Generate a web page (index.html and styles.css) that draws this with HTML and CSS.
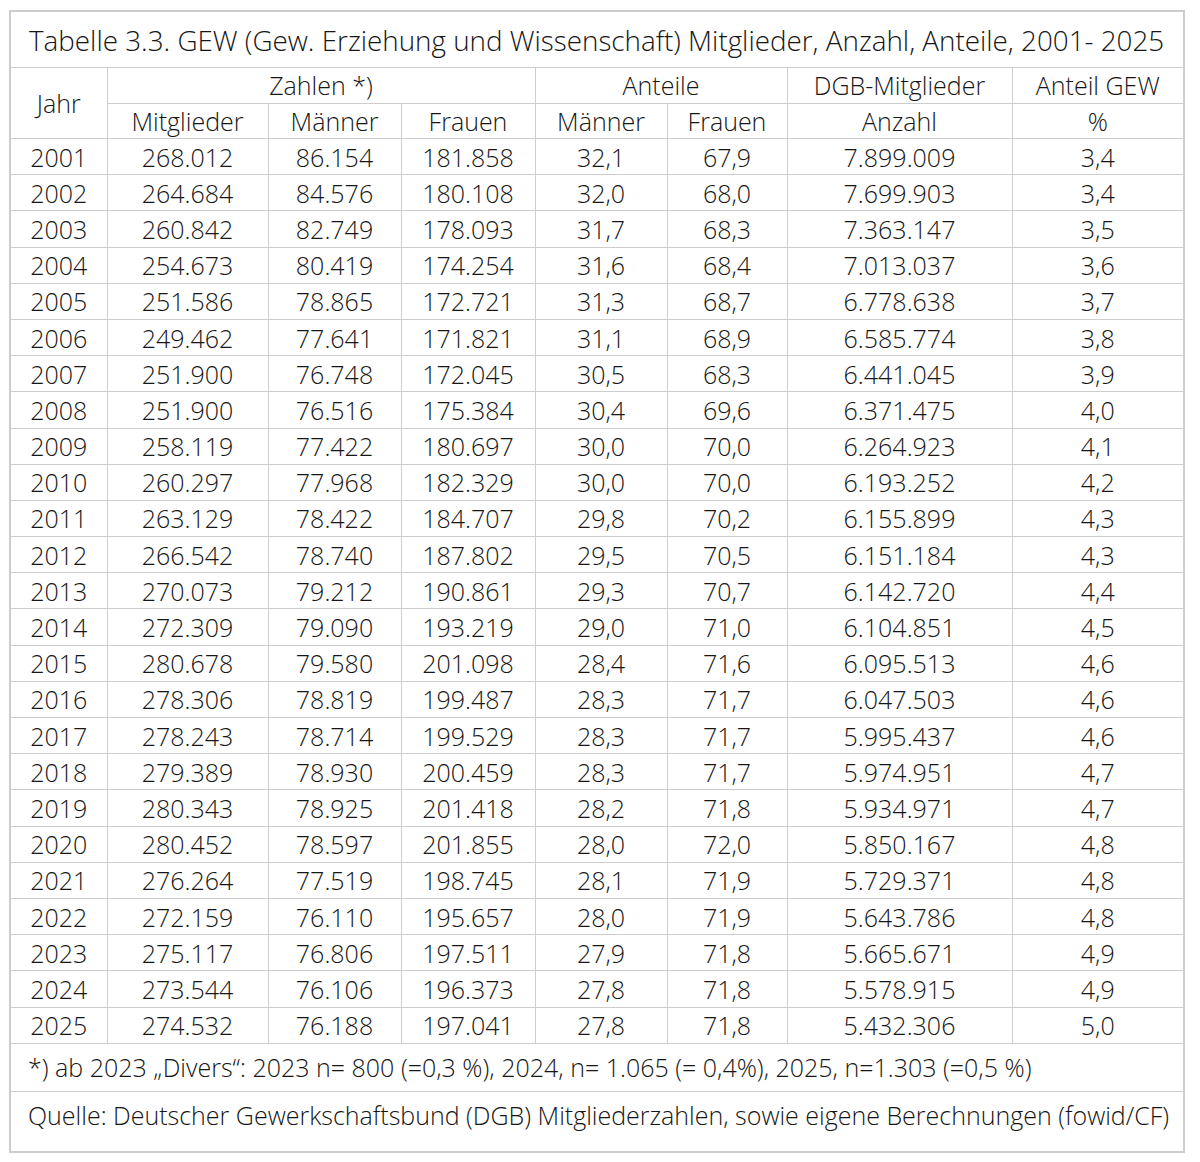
FILE: index.html
```html
<!DOCTYPE html>
<html lang="de">
<head>
<meta charset="utf-8">
<title>Tabelle 3.3 GEW</title>
<link rel="stylesheet" href="styles.css">
</head>
<body>
<table class="tbl">
  <colgroup>
    <col class="c-jahr"><col class="c-mit"><col class="c-m"><col class="c-f"><col class="c-am"><col class="c-af"><col class="c-dgb"><col class="c-ant">
  </colgroup>
  <thead>
    <tr class="title-row"><th colspan="8" class="title">Tabelle 3.3. GEW (Gew. Erziehung und Wissenschaft) Mitglieder, Anzahl, Anteile, 2001- 2025</th></tr>
    <tr class="hrow"><th rowspan="2">Jahr</th><th colspan="3">Zahlen *)</th><th colspan="2">Anteile</th><th>DGB-Mitglieder</th><th>Anteil GEW</th></tr>
    <tr class="hrow"><th>Mitglieder</th><th>Männer</th><th>Frauen</th><th>Männer</th><th>Frauen</th><th>Anzahl</th><th>%</th></tr>
  </thead>
  <tbody>
    <tr><td>2001</td><td>268.012</td><td>86.154</td><td>181.858</td><td>32,1</td><td>67,9</td><td>7.899.009</td><td>3,4</td></tr>
    <tr><td>2002</td><td>264.684</td><td>84.576</td><td>180.108</td><td>32,0</td><td>68,0</td><td>7.699.903</td><td>3,4</td></tr>
    <tr><td>2003</td><td>260.842</td><td>82.749</td><td>178.093</td><td>31,7</td><td>68,3</td><td>7.363.147</td><td>3,5</td></tr>
    <tr><td>2004</td><td>254.673</td><td>80.419</td><td>174.254</td><td>31,6</td><td>68,4</td><td>7.013.037</td><td>3,6</td></tr>
    <tr><td>2005</td><td>251.586</td><td>78.865</td><td>172.721</td><td>31,3</td><td>68,7</td><td>6.778.638</td><td>3,7</td></tr>
    <tr><td>2006</td><td>249.462</td><td>77.641</td><td>171.821</td><td>31,1</td><td>68,9</td><td>6.585.774</td><td>3,8</td></tr>
    <tr><td>2007</td><td>251.900</td><td>76.748</td><td>172.045</td><td>30,5</td><td>68,3</td><td>6.441.045</td><td>3,9</td></tr>
    <tr><td>2008</td><td>251.900</td><td>76.516</td><td>175.384</td><td>30,4</td><td>69,6</td><td>6.371.475</td><td>4,0</td></tr>
    <tr><td>2009</td><td>258.119</td><td>77.422</td><td>180.697</td><td>30,0</td><td>70,0</td><td>6.264.923</td><td>4,1</td></tr>
    <tr><td>2010</td><td>260.297</td><td>77.968</td><td>182.329</td><td>30,0</td><td>70,0</td><td>6.193.252</td><td>4,2</td></tr>
    <tr><td>2011</td><td>263.129</td><td>78.422</td><td>184.707</td><td>29,8</td><td>70,2</td><td>6.155.899</td><td>4,3</td></tr>
    <tr><td>2012</td><td>266.542</td><td>78.740</td><td>187.802</td><td>29,5</td><td>70,5</td><td>6.151.184</td><td>4,3</td></tr>
    <tr><td>2013</td><td>270.073</td><td>79.212</td><td>190.861</td><td>29,3</td><td>70,7</td><td>6.142.720</td><td>4,4</td></tr>
    <tr><td>2014</td><td>272.309</td><td>79.090</td><td>193.219</td><td>29,0</td><td>71,0</td><td>6.104.851</td><td>4,5</td></tr>
    <tr><td>2015</td><td>280.678</td><td>79.580</td><td>201.098</td><td>28,4</td><td>71,6</td><td>6.095.513</td><td>4,6</td></tr>
    <tr><td>2016</td><td>278.306</td><td>78.819</td><td>199.487</td><td>28,3</td><td>71,7</td><td>6.047.503</td><td>4,6</td></tr>
    <tr><td>2017</td><td>278.243</td><td>78.714</td><td>199.529</td><td>28,3</td><td>71,7</td><td>5.995.437</td><td>4,6</td></tr>
    <tr><td>2018</td><td>279.389</td><td>78.930</td><td>200.459</td><td>28,3</td><td>71,7</td><td>5.974.951</td><td>4,7</td></tr>
    <tr><td>2019</td><td>280.343</td><td>78.925</td><td>201.418</td><td>28,2</td><td>71,8</td><td>5.934.971</td><td>4,7</td></tr>
    <tr><td>2020</td><td>280.452</td><td>78.597</td><td>201.855</td><td>28,0</td><td>72,0</td><td>5.850.167</td><td>4,8</td></tr>
    <tr><td>2021</td><td>276.264</td><td>77.519</td><td>198.745</td><td>28,1</td><td>71,9</td><td>5.729.371</td><td>4,8</td></tr>
    <tr><td>2022</td><td>272.159</td><td>76.110</td><td>195.657</td><td>28,0</td><td>71,9</td><td>5.643.786</td><td>4,8</td></tr>
    <tr><td>2023</td><td>275.117</td><td>76.806</td><td>197.511</td><td>27,9</td><td>71,8</td><td>5.665.671</td><td>4,9</td></tr>
    <tr><td>2024</td><td>273.544</td><td>76.106</td><td>196.373</td><td>27,8</td><td>71,8</td><td>5.578.915</td><td>4,9</td></tr>
    <tr><td>2025</td><td>274.532</td><td>76.188</td><td>197.041</td><td>27,8</td><td>71,8</td><td>5.432.306</td><td>5,0</td></tr>
  </tbody>
  <tfoot>
    <tr class="note-row"><td colspan="8" class="note">*) ab 2023 „Divers“: 2023 n= 800 (=0,3 %), 2024, n= 1.065 (= 0,4%), 2025, n=1.303 (=0,5 %)</td></tr>
    <tr class="src-row"><td colspan="8" class="src">Quelle: Deutscher Gewerkschaftsbund (DGB) Mitgliederzahlen, sowie eigene Berechnungen (fowid/CF)</td></tr>
  </tfoot>
</table>
</body>
</html>
```

FILE: styles.css
```css
html, body {
  margin: 0;
  padding: 0;
  background: #ffffff;
}

body {
  padding: 10px 0 0 9px;
  font-family: "Open Sans", "Noto Sans", sans-serif;
  font-weight: 350;
  color: #161616;
}

.tbl {
  border-collapse: collapse;
  table-layout: fixed;
  width: 1174px;
  font-size: 25px;
  border: 2px solid #cdcdcd;
}

.c-jahr { width: 97px; }
.c-mit { width: 161px; }
.c-m { width: 133px; }
.c-f { width: 134px; }
.c-am { width: 132px; }
.c-af { width: 120px; }
.c-dgb { width: 225px; }
.c-ant { width: 172px; }

.tbl th,
.tbl td {
  border: 1px solid #cdcdcd;
  padding: 0;
  text-align: center;
  font-weight: 350;
  line-height: 30px;
  white-space: nowrap;
}

.title-row th {
  height: 54px;
}

.title {
  text-align: left !important;
  font-size: 27.8px;
  padding-left: 18px !important;
  padding-top: 1px !important;
}

.hrow th {
  height: 34.5px;
}

.tbl tbody td {
  height: 35.2px;
}

.note-row td {
  height: 47px;
}

.note {
  text-align: left !important;
  padding-left: 17px !important;
}

.src-row td {
  height: 51px;
}

.src {
  text-align: left !important;
  vertical-align: top;
  padding-left: 17px !important;
  padding-top: 8px !important;
}
```
